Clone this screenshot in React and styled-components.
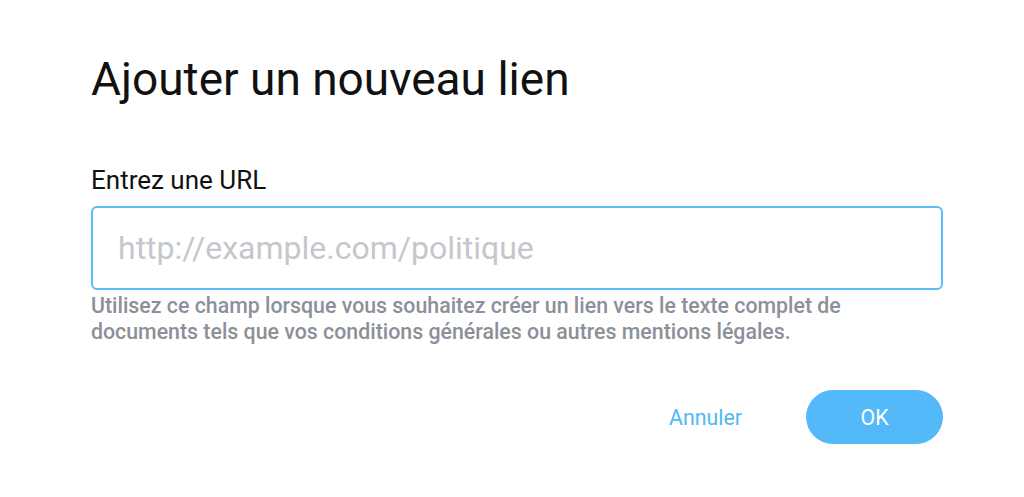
import React from "react";
import styled, { createGlobalStyle } from "styled-components";

const Global = createGlobalStyle`
  html, body { margin: 0; padding: 0; background: #fff; }
  body { font-family: Roboto, "Noto Sans", sans-serif; }
`;

const Dialog = styled.div`
  width: 852px;
  padding: 52px 0 0 91px;
  display: flex;
  flex-direction: column;
`;

const Title = styled.h1`
  margin: 0;
  font-size: 46px;
  line-height: 54px;
  font-weight: 400;
  color: #111;
`;

const Label = styled.label`
  margin-top: 58px;
  font-size: 26px;
  line-height: 32px;
  color: #111;
`;

const Input = styled.input`
  margin-top: 10px;
  box-sizing: border-box;
  height: 84px;
  width: 100%;
  border: 2px solid #5bbcf7;
  border-radius: 6px;
  padding: 0 25px;
  font-family: Roboto, sans-serif;
  font-size: 32px;
  color: #222;
  outline: none;
  &::placeholder { color: #c4c7cc; }
`;

const Help = styled.p`
  margin: 3px 0 0;
  max-width: 800px;
  font-size: 21.33px;
  line-height: 26px;
  font-weight: 500;
  color: #8c9099;
`;

const Actions = styled.div`
  margin-top: 45px;
  display: flex;
  justify-content: flex-end;
  align-items: center;
  gap: 64px;
`;

const Button = styled.button`
  font-family: Roboto, sans-serif;
  font-size: 21.33px;
  border: none;
  cursor: pointer;
  background: ${(p) => (p.$primary ? "#53b9f8" : "transparent")};
  color: ${(p) => (p.$primary ? "#fff" : "#4fb8f7")};
  height: 54px;
  width: ${(p) => (p.$primary ? "137px" : "auto")};
  padding: 0;
  border-radius: 27px;
`;

export default function App() {
  return (
    <>
      <Global />
      <Dialog>
        <Title>Ajouter un nouveau lien</Title>
        <Label>Entrez une URL</Label>
        <Input placeholder="http://example.com/politique" />
        <Help>
          Utilisez ce champ lorsque vous souhaitez créer un lien vers le texte complet de
          documents tels que vos conditions générales ou autres mentions légales.
        </Help>
        <Actions>
          <Button>Annuler</Button>
          <Button $primary>OK</Button>
        </Actions>
      </Dialog>
    </>
  );
}
